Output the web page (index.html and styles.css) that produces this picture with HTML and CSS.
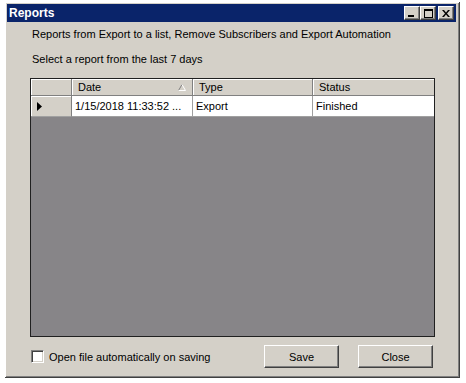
FILE: index.html
```html
<!DOCTYPE html>
<html lang="en">
<head>
    <meta charset="UTF-8">
    <title>Reports</title>
    <link rel="stylesheet" href="styles.css">
</head>
<body>
    <div class="window">
        <div class="titlebar">
            <span class="title">Reports</span>
            <div class="title-buttons">
                <span class="tbtn"><svg width="8" height="7" viewBox="0 0 8 7"><rect x="0" y="5" width="6" height="2" fill="#000"/></svg></span>
                <span class="tbtn"><svg width="9" height="9" viewBox="0 0 9 9"><rect x="0.5" y="0.5" width="8" height="8" fill="none" stroke="#000"/><rect x="0" y="0" width="9" height="2" fill="#000"/></svg></span>
                <span class="tbtn close-btn"><svg width="8" height="7" viewBox="0 0 8 7"><path d="M0 0h2l2 2.5L6 0h2L5 3.5 8 7H6L4 4.5 2 7H0l3-3.5z" fill="#000"/></svg></span>
            </div>
        </div>

        <div class="content">
            <p class="intro">Reports from Export to a list, Remove Subscribers and Export Automation</p>
            <p class="hint">Select a report from the last 7 days</p>

            <div class="grid">
                <div class="grid-head">
                    <div class="hcell corner"></div>
                    <div class="hcell">Date <svg class="sort" width="8" height="7" viewBox="0 0 8 7"><path d="M0.5 6.5 L4 0.5" stroke="#808080" fill="none"/><path d="M4 0.5 L7.5 6.5 L0.5 6.5" stroke="#fff" fill="none"/></svg></div>
                    <div class="hcell">Type</div>
                    <div class="hcell">Status</div>
                </div>
                <div class="grid-row">
                    <div class="rcell rowhead"><svg width="5" height="9" viewBox="0 0 5 9"><path d="M0 0 L5 4.5 L0 9 Z" fill="#000"/></svg></div>
                    <div class="rcell">1/15/2018 11:33:52 ...</div>
                    <div class="rcell">Export</div>
                    <div class="rcell">Finished</div>
                </div>
                <div class="grid-empty"></div>
            </div>

            <div class="footer">
                <label class="check"><span class="box"></span>Open file automatically on saving</label>
                <div class="buttons">
                    <button class="btn">Save</button>
                    <button class="btn">Close</button>
                </div>
            </div>
        </div>
    </div>
</body>
</html>
```

FILE: styles.css
```css
body {
    margin: 0;
    background-color: #fff;
    font-family: "Liberation Sans", Arial, sans-serif;
    font-size: 11px;
    color: #000;
}
.window {
    box-sizing: border-box;
    width: 455px;
    height: 376px;
    margin: 2px 0 0 5px;
    background-color: #d4d0c8;
    border-right: 1px solid #404040;
    border-bottom: 1px solid #404040;
    box-shadow: inset 1px 1px #fff, inset -1px -1px #808080;
    padding: 2px 3px 0 2px;
    display: flex;
    flex-direction: column;
}
.titlebar {
    height: 18px;
    background-color: #0a246a;
    display: flex;
    align-items: center;
    justify-content: space-between;
    padding: 0 2px 0 2px;
}
.title {
    color: #fff;
    font-weight: bold;
    font-size: 12px;
}
.title-buttons {
    display: flex;
}
.tbtn {
    box-sizing: border-box;
    width: 16px;
    height: 14px;
    background-color: #d4d0c8;
    border-top: 1px solid #fff;
    border-left: 1px solid #fff;
    border-right: 1px solid #404040;
    border-bottom: 1px solid #404040;
    box-shadow: inset -1px -1px #808080;
    display: flex;
    align-items: center;
    justify-content: center;
}
.close-btn {
    margin-left: 2px;
}
.content {
    flex: 1;
    padding: 0 0 0 23px;
    display: flex;
    flex-direction: column;
}
.intro {
    margin: 5px 0 0 2px;
    line-height: 14px;
}
.hint {
    margin: 11px 0 0 2px;
    line-height: 14px;
}
.grid {
    box-sizing: border-box;
    margin-top: 12px;
    width: 405px;
    height: 259px;
    border: 1px solid #202020;
    background-color: #878588;
    display: flex;
    flex-direction: column;
}
.grid-head,
.grid-row {
    display: grid;
    grid-template-columns: 41px 121px 120px 1fr;
}
.grid-head {
    height: 17px;
    background-color: #d4d0c8;
}
.hcell {
    box-sizing: border-box;
    border-right: 1px solid #808080;
    box-shadow: inset 1px 1px #fff;
    padding-left: 6px;
    line-height: 16px;
    display: flex;
    align-items: center;
    border-bottom: 1px solid #808080;
}
.hcell:last-child {
    border-right: none;
}
.sort {
    flex-shrink: 0;
    margin-left: auto;
    margin-right: 6px;
}
.grid-row {
    height: 21px;
    background-color: #fff;
}
.rcell {
    box-sizing: border-box;
    border-right: 1px solid #a0a0a0;
    border-bottom: 1px solid #a0a0a0;
    padding-left: 3px;
    display: flex;
    align-items: center;
    white-space: nowrap;
    overflow: hidden;
}
.rcell:last-child {
    border-right: none;
}
.rowhead {
    background-color: #d4d0c8;
    padding-left: 6px;
    border-right: 1px solid #808080;
    box-shadow: inset 1px 1px #fff;
}
.grid-empty {
    flex: 1;
}
.footer {
    display: flex;
    align-items: center;
    justify-content: space-between;
    margin-top: 8px;
    width: 405px;
}
.check {
    display: flex;
    align-items: center;
    margin-left: 1px;
}
.box {
    box-sizing: border-box;
    width: 13px;
    height: 13px;
    background-color: #fff;
    border-top: 1px solid #808080;
    border-left: 1px solid #808080;
    border-right: 1px solid #fff;
    border-bottom: 1px solid #fff;
    box-shadow: inset 1px 1px #404040, inset -1px -1px #d4d0c8;
    margin-right: 5px;
}
.buttons {
    display: flex;
    gap: 19px;
    margin-right: 2px;
}
.btn {
    box-sizing: border-box;
    width: 75px;
    height: 23px;
    background-color: #d4d0c8;
    font-family: "Liberation Sans", Arial, sans-serif;
    font-size: 11px;
    color: #000;
    border-top: 1px solid #fff;
    border-left: 1px solid #fff;
    border-right: 1px solid #404040;
    border-bottom: 1px solid #404040;
    box-shadow: inset -1px -1px #808080;
    padding: 0;
}
```
